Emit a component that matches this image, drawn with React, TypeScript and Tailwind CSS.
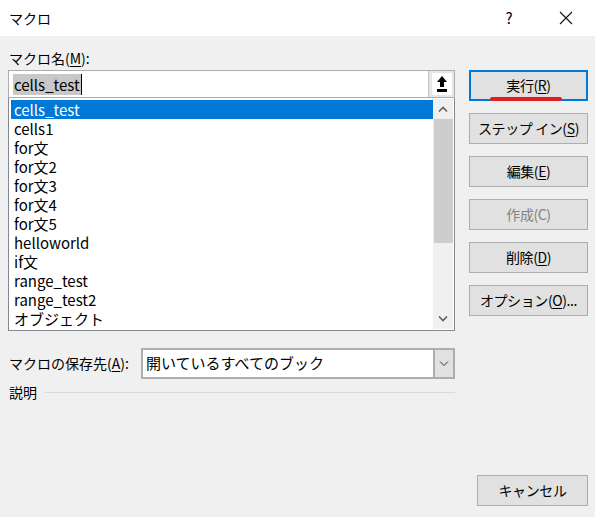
import React from "react";

const items = [
  "cells_test",
  "cells1",
  "for文",
  "for文2",
  "for文3",
  "for文4",
  "for文5",
  "helloworld",
  "if文",
  "range_test",
  "range_test2",
  "オブジェクト",
];

function Btn({ children, disabled, primary, narrow }: { children: React.ReactNode; disabled?: boolean; primary?: boolean; narrow?: boolean }) {
  return (
    <div
      className={
        "relative flex h-[31px] items-center justify-center bg-[#e1e1e1] text-[14px] tracking-[-0.4px] " +
        (narrow ? "w-[111px] " : "w-[119px] ") +
        (primary ? "border-2 border-[#0078d7] " : "border border-[#adadad] ") +
        (disabled ? "text-[#838383]" : "text-black")
      }
    >
      {children}
    </div>
  );
}

export default function App() {
  return (
    <div
      className="flex h-[517px] w-[595px] flex-col overflow-hidden bg-[#f0f0f0] text-black"
      style={{ fontFamily: '"Noto Sans CJK JP", "Noto Sans", sans-serif' }}
    >
      {/* title bar */}
      <div className="flex h-[36px] items-center bg-white">
        <div className="pl-[9px] text-[14px]">マクロ</div>
        <div className="ml-auto flex items-center">
          <div className="w-[20px] text-center text-[15px]">?</div>
          <div className="ml-[37px] mr-[19px] flex h-[20px] w-[20px] items-center justify-center">
            <svg width="14" height="14" viewBox="0 0 14 14">
              <path d="M1 1 L13 13 M13 1 L1 13" stroke="#111" strokeWidth="1.1" />
            </svg>
          </div>
        </div>
      </div>

      {/* body */}
      <div className="flex flex-1 pl-[8px]">
        {/* left column */}
        <div className="flex w-[447px] flex-col">
          <div className="mt-[11px] h-[23px] pl-[1px] text-[14px] leading-[23px]">
            マクロ名(<span className="underline underline-offset-2">M</span>):
          </div>
          {/* input */}
          <div className="flex h-[28px] border border-[#adadad] bg-white">
            <div className="flex flex-1 items-center pl-[4px]">
              <span className="bg-[#c8c8c8] px-[1px] text-[15px] leading-[21px]">cells_test</span>
              <span className="h-[21px] w-[1px] bg-black" />
            </div>
            <div className="flex w-[26px] items-center justify-center border-l border-[#c4c4c4] bg-[#e6e6e6]">
              <div className="flex h-[22px] w-[20px] items-center justify-center bg-white">
                <svg width="12" height="16" viewBox="0 0 12 16">
                  <path d="M6 0 L11 6 L8 6 L8 11 L4 11 L4 6 L1 6 Z" fill="#000" />
                  <rect x="1" y="13" width="10" height="3" fill="#000" />
                </svg>
              </div>
            </div>
          </div>
          {/* list */}
          <div className="flex h-[233px] border border-t-0 border-[#828790] bg-white">
            <div className="flex-1 pl-[2px] pt-[2px]">
              {items.map((it, i) => (
                <div
                  key={it}
                  className={
                    "h-[19px] pl-[3px] text-[15px] leading-[19px] " +
                    (i === 0 ? "bg-[#0078d7] text-white" : "")
                  }
                >
                  {it}
                </div>
              ))}
            </div>
            <div className="mb-[1px] mr-[1px] mt-[1px] flex w-[20px] flex-col items-center bg-[#f0f0f0]">
              <div className="flex h-[20px] w-full items-center justify-center">
                <svg width="10" height="6" viewBox="0 0 10 6">
                  <path d="M1 5.5 L5 1.5 L9 5.5" stroke="#606060" strokeWidth="1.6" fill="none" />
                </svg>
              </div>
              <div className="h-[124px] w-[19px] bg-[#cdcdcd]" />
              <div className="flex-1" />
              <div className="flex h-[20px] w-full items-center justify-center">
                <svg width="10" height="6" viewBox="0 0 10 6">
                  <path d="M1 0.5 L5 4.5 L9 0.5" stroke="#606060" strokeWidth="1.6" fill="none" />
                </svg>
              </div>
            </div>
          </div>
          {/* combo */}
          <div className="mt-[17px] flex items-center">
            <div className="w-[133px] pl-[1px] text-[14px]">
              マクロの保存先(<span className="underline underline-offset-2">A</span>):
            </div>
            <div className="flex h-[31px] flex-1 border-2 border-[#adadad] bg-white">
              <div className="flex flex-1 items-center pl-[3px] text-[15px]">開いているすべてのブック</div>
              <div className="flex w-[20px] items-center justify-center border-l-2 border-[#adadad] bg-[#e1e1e1]">
                <svg width="10" height="6" viewBox="0 0 10 6">
                  <path d="M1 0.5 L5 4.5 L9 0.5" stroke="#333" strokeWidth="1" fill="none" />
                </svg>
              </div>
            </div>
          </div>
          {/* description */}
          <div className="mt-[3px] flex items-center">
            <div className="pl-[1px] text-[14px]">説明</div>
            <div className="ml-[8px] h-[1px] flex-1 bg-[#d9d9d9]" />
          </div>
        </div>

        {/* right column */}
        <div className="ml-[14px] flex flex-col">
          <div className="mt-[34px] flex flex-col gap-[12px]">
            <Btn primary>
              <span>
                実行(<span className="underline underline-offset-2">R</span>)
              </span>
              <span className="absolute bottom-[-2px] left-[19px] h-[4px] w-[72px] rounded-full bg-[#e02020]" />
            </Btn>
            <Btn>
              <span>
                ステップ イン(<span className="underline underline-offset-2">S</span>)
              </span>
            </Btn>
            <Btn>
              <span>
                編集(<span className="underline underline-offset-2">E</span>)
              </span>
            </Btn>
            <Btn disabled>作成(C)</Btn>
            <Btn>
              <span>
                削除(<span className="underline underline-offset-2">D</span>)
              </span>
            </Btn>
            <Btn>
              <span>
                オプション(<span className="underline underline-offset-2">O</span>)...
              </span>
            </Btn>
          </div>
          <div className="mb-[11px] mt-auto flex justify-end">
            <Btn narrow>キャンセル</Btn>
          </div>
        </div>
      </div>
    </div>
  );
}
